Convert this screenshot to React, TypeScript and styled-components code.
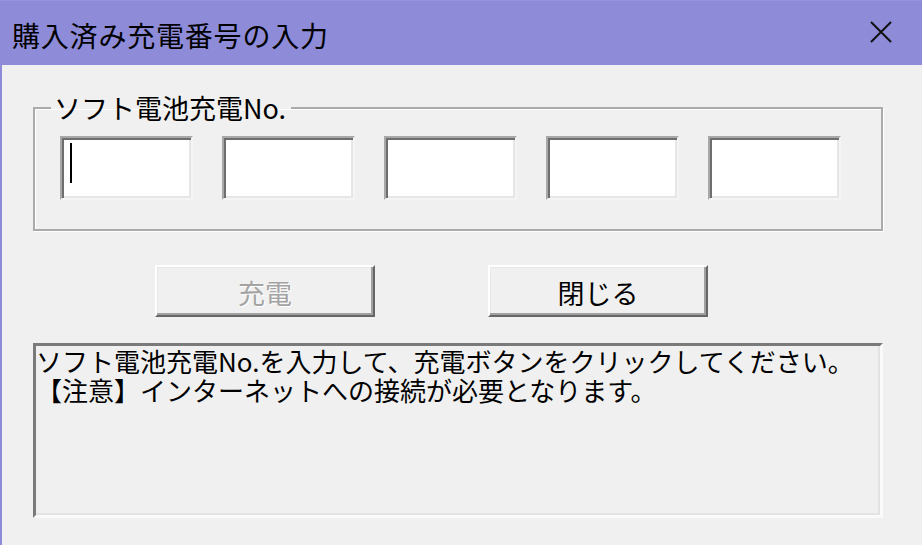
import React from "react";
import styled, { createGlobalStyle } from "styled-components";

const Global = createGlobalStyle`
  html, body { margin: 0; padding: 0; background: #f0f0f0; }
  body { font-family: "Noto Sans CJK JP", "Noto Sans", sans-serif; }
  * { box-sizing: border-box; }
`;

const Window = styled.div`
  width: 922px;
  height: 545px;
  display: flex;
  flex-direction: column;
  background: #f0f0f0;
  overflow: hidden;
`;

const TitleBar = styled.div`
  height: 65px;
  flex: none;
  display: flex;
  align-items: center;
  justify-content: space-between;
  padding: 4px 30px 0 12px;
  background: #8e8bd8;
  border-top: 1px solid #9693dc;
`;

const Title = styled.div`
  font-size: 28px;
  letter-spacing: 0.8px;
  color: #000;
  line-height: 1;
`;

const CloseIcon = styled.svg`
  width: 22px;
  height: 22px;
  display: block;
  margin-top: -6px;
`;

const Body = styled.div`
  flex: 1;
  display: flex;
  flex-direction: column;
  border-left: 2px solid #8e8bd8;
  padding: 29px 37px 0 31px;
`;

const Group = styled.fieldset`
  margin: 0;
  width: 850px;
  height: 137px;
  padding: 0;
  border: 2px solid #ababab;
  box-shadow: inset 1px 1px 0 #fff, 1px 1px 0 #fff;
`;

const Legend = styled.legend`
  margin-left: 16px;
  padding: 0 5px 0 3px;
  font-size: 27px;
  line-height: 28px;
  color: #000;
`;

const EditRow = styled.div`
  display: flex;
  gap: 29px;
  align-items: flex-start;
  padding: 14px 0 0 25px;
`;

const EditBox = styled.div`
  width: 133px;
  height: 64px;
  flex: none;
  background: #fff;
  border: 2px solid;
  border-color: #a8a8a8 #f4f4f4 #f4f4f4 #a8a8a8;
  box-shadow: inset 2px 2px 0 #6e6e6e, inset -2px -2px 0 #e6e6e6;
  padding: 5px 0 0 8px;
`;

const Caret = styled.div`
  width: 2px;
  height: 40px;
  background: #000;
`;

const ButtonRow = styled.div`
  display: flex;
  gap: 113px;
  padding-left: 122px;
  margin-top: 34px;
`;

const Button = styled.div<{ $disabled?: boolean }>`
  width: 220px;
  height: 52px;
  display: flex;
  align-items: center;
  justify-content: center;
  background: #f0f0f0;
  border: 2px solid;
  border-color: #ffffff #666666 #666666 #ffffff;
  box-shadow: inset -2px -2px 0 #a0a0a0, inset 1px 1px 0 #e8e8e8;
  font-size: 27px;
  line-height: 1;
  padding-top: 2px;
  color: ${(p) => (p.$disabled ? "#a3a3a3" : "#000")};
  text-shadow: ${(p) => (p.$disabled ? "1px 1px 0 #fff" : "none")};
`;

const MessageBox = styled.div`
  margin-top: 26px;
  width: 850px;
  height: 175px;
  background: #f0f0f0;
  border: 3px solid;
  border-color: #7a7a7a #fafafa #fafafa #7a7a7a;
  box-shadow: inset -2px -2px 0 #e3e3e3;
  padding: 0;
  font-size: 26px;
  line-height: 29px;
  color: #000;
  overflow: hidden;
`;

const Line = styled.div`
  white-space: nowrap;
`;

export default function App() {
  return (
    <>
      <Global />
      <Window>
        <TitleBar>
          <Title>購入済み充電番号の入力</Title>
          <CloseIcon viewBox="0 0 22 22">
            <path d="M1 1 L21 21 M21 1 L1 21" stroke="#111" strokeWidth="2" fill="none" />
          </CloseIcon>
        </TitleBar>
        <Body>
          <Group>
            <Legend>ソフト電池充電No.</Legend>
            <EditRow>
              <EditBox>
                <Caret />
              </EditBox>
              <EditBox />
              <EditBox />
              <EditBox />
              <EditBox />
            </EditRow>
          </Group>
          <ButtonRow>
            <Button $disabled>充電</Button>
            <Button>閉じる</Button>
          </ButtonRow>
          <MessageBox>
            <Line>ソフト電池充電No.を入力して、充電ボタンをクリックしてください。</Line>
            <Line>【注意】インターネットへの接続が必要となります。</Line>
          </MessageBox>
        </Body>
      </Window>
    </>
  );
}
